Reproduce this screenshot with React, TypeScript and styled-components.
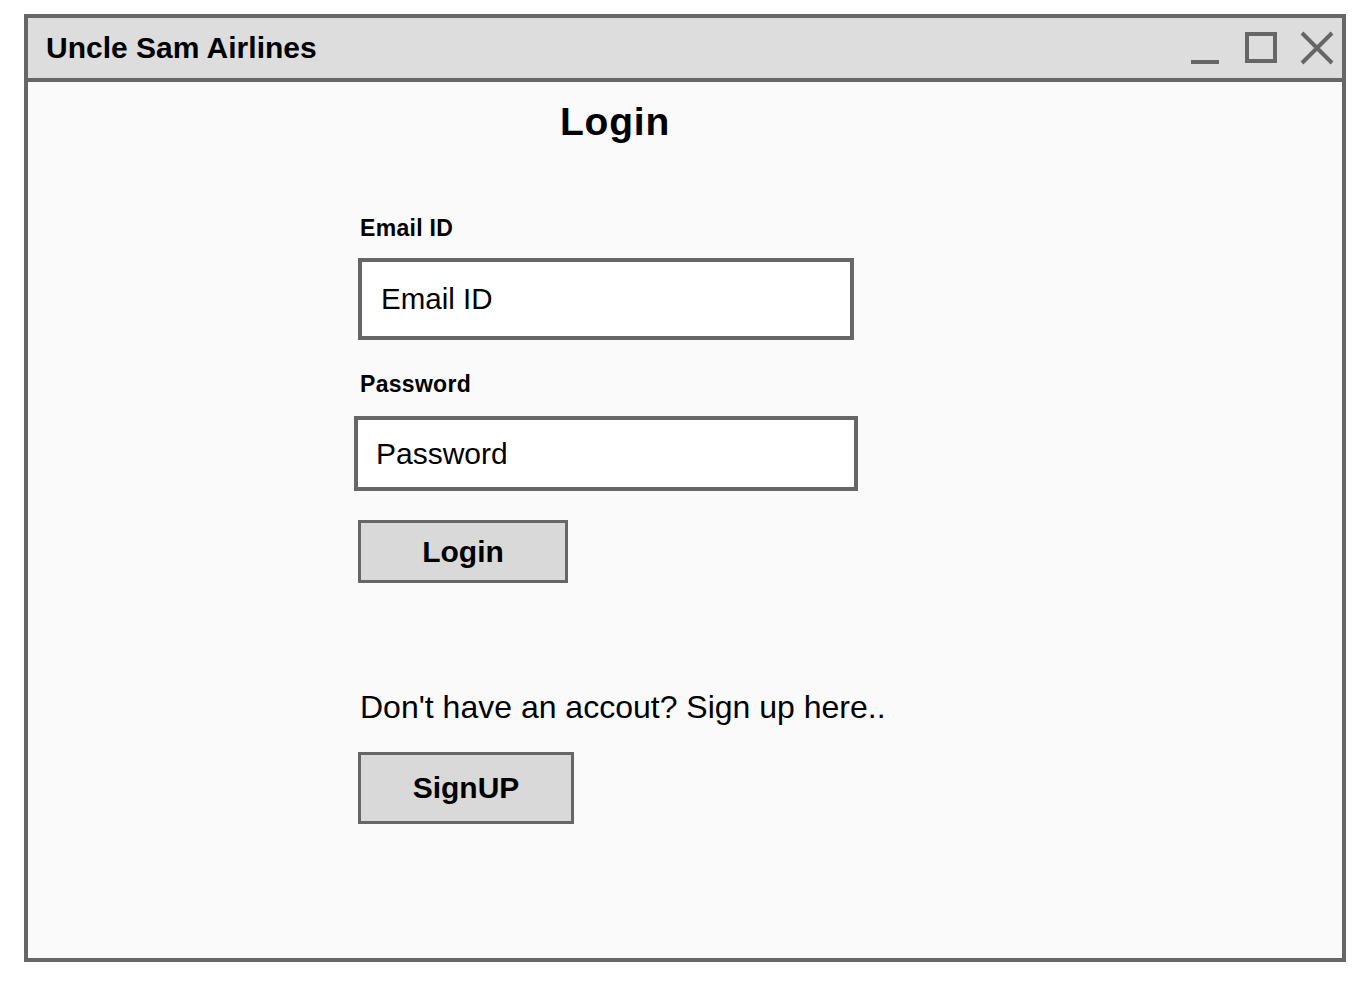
import React from "react";
import styled, { createGlobalStyle } from "styled-components";

const Global = createGlobalStyle`
  html, body { margin: 0; padding: 0; background: #ffffff; }
  body { font-family: "Liberation Sans", Arial, Helvetica, sans-serif; color: #000; }
  * { box-sizing: border-box; }
`;

const Page = styled.div`
  padding: 14px 22px 20px 24px;
`;

const Window = styled.div`
  width: 1322px;
  height: 948px;
  border: 4px solid #666666;
  background: #fafafa;
  display: flex;
  flex-direction: column;
`;

const TitleBar = styled.div`
  height: 64px;
  flex: none;
  background: #dddddd;
  border-bottom: 4px solid #666666;
  display: flex;
  align-items: center;
  justify-content: space-between;
  padding: 0 8px 0 18px;
`;

const Title = styled.div`
  font-size: 30px;
  font-weight: 700;
  line-height: 1;
`;

const Controls = styled.div`
  display: flex;
  align-items: flex-start;
  height: 34px;
`;

const Icon = styled.svg<{ $gap?: number }>`
  display: block;
  margin-left: ${(p) => p.$gap ?? 0}px;
  flex: none;
`;

const Content = styled.div`
  flex: 1;
  display: flex;
  flex-direction: column;
  align-items: flex-start;
  padding-left: 330px;
`;

const Heading = styled.h1`
  margin: 20px 0 0 202px;
  font-size: 39px;
  font-weight: 700;
  line-height: 1;
  letter-spacing: 0.8px;
`;

const Label = styled.label<{ $top: number }>`
  display: block;
  margin: ${(p) => p.$top}px 0 0 2px;
  font-size: 23px;
  font-weight: 700;
  line-height: 1;
  letter-spacing: 0.3px;
`;

const Field = styled.input<{ $top: number; $w: number; $h: number; $dx: number; $fs: number; $pl: number }>`
  display: block;
  margin: ${(p) => p.$top}px 0 0 ${(p) => p.$dx}px;
  width: ${(p) => p.$w}px;
  height: ${(p) => p.$h}px;
  border: 4px solid #666666;
  border-radius: 0;
  background: #ffffff;
  padding: 0 0 0 ${(p) => p.$pl}px;
  font-family: "Liberation Sans", Arial, Helvetica, sans-serif;
  font-size: ${(p) => p.$fs}px;
  color: #000;
  outline: none;
  &::placeholder { color: #000; opacity: 1; }
`;

const Button = styled.button<{ $top: number; $w: number; $h: number }>`
  display: flex;
  align-items: center;
  justify-content: center;
  margin-top: ${(p) => p.$top}px;
  width: ${(p) => p.$w}px;
  height: ${(p) => p.$h}px;
  border: 3px solid #666666;
  border-radius: 0;
  background: #d9d9d9;
  padding: 0;
  font-family: "Liberation Sans", Arial, Helvetica, sans-serif;
  font-size: 30px;
  font-weight: 700;
  color: #000;
  line-height: 1;
`;

const Prompt = styled.p`
  margin: 108px 0 0 2px;
  font-size: 32px;
  line-height: 1;
`;

export default function App() {
  return (
    <>
      <Global />
      <Page>
        <Window>
          <TitleBar>
            <Title>Uncle Sam Airlines</Title>
            <Controls>
              <Icon width="28" height="34" viewBox="0 0 28 34">
                <rect x="0" y="29" width="28" height="4" fill="#666666" />
              </Icon>
              <Icon $gap={26} width="32" height="34" viewBox="0 0 32 34">
                <rect x="2" y="3" width="28" height="27" fill="none" stroke="#666666" strokeWidth="4" />
              </Icon>
              <Icon $gap={23} width="34" height="34" viewBox="0 0 34 34">
                <path d="M2 2 L32 32 M32 2 L2 32" stroke="#666666" strokeWidth="4" fill="none" />
              </Icon>
            </Controls>
          </TitleBar>
          <Content>
            <Heading>Login</Heading>
            <Label $top={76} htmlFor="email">Email ID</Label>
            <Field id="email" type="text" placeholder="Email ID" $top={18} $w={496} $h={82} $dx={0} $fs={29.5} $pl={19} />
            <Label $top={33} htmlFor="password">Password</Label>
            <Field id="password" type="text" placeholder="Password" $top={20} $w={504} $h={75} $dx={-4} $fs={30} $pl={18} />
            <Button $top={29} $w={210} $h={63}>Login</Button>
            <Prompt>Don't have an accout? Sign up here..</Prompt>
            <Button $top={29} $w={216} $h={72}>SignUP</Button>
          </Content>
        </Window>
      </Page>
    </>
  );
}
